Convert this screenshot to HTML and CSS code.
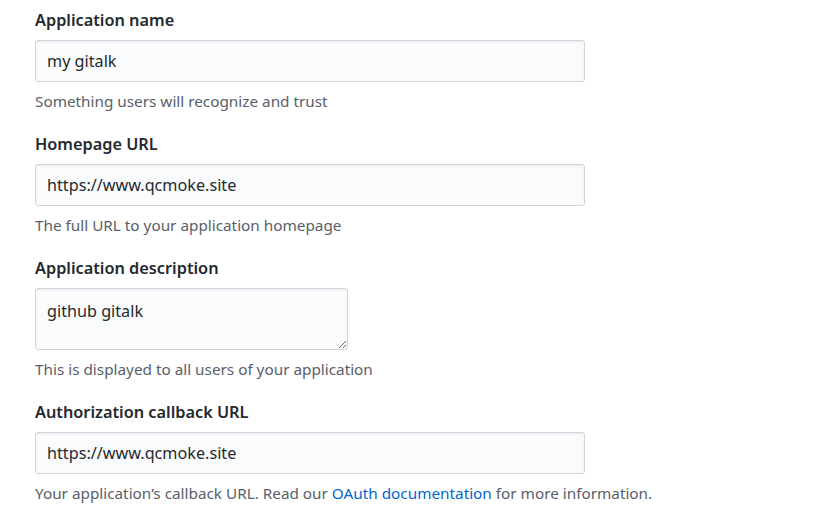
FILE: index.html
```html
<!DOCTYPE html>
<html>
<head>
<meta charset="utf-8">
<link rel="stylesheet" href="styles.css">
</head>
<body>
<form class="form">
  <div class="group">
    <label class="label">Application name</label>
    <input class="field" type="text" value="my gitalk">
    <p class="note">Something users will recognize and trust</p>
  </div>
  <div class="group">
    <label class="label">Homepage URL</label>
    <input class="field" type="text" value="https://www.qcmoke.site">
    <p class="note">The full URL to your application homepage</p>
  </div>
  <div class="group">
    <label class="label">Application description</label>
    <textarea class="field area">github gitalk</textarea>
    <p class="note">This is displayed to all users of your application</p>
  </div>
  <div class="group">
    <label class="label">Authorization callback URL</label>
    <input class="field" type="text" value="https://www.qcmoke.site">
    <p class="note">Your application’s callback URL. Read our <a class="link" href="#">OAuth documentation</a> for more information.</p>
  </div>
</form>
</body>
</html>
```

FILE: styles.css
```css
html, body {
  margin: 0;
  padding: 0;
  background: #ffffff;
}
body {
  font-family: "Noto Sans", "Open Sans", "Liberation Sans", sans-serif;
  color: #24292e;
}
.form {
  display: flex;
  flex-direction: column;
  gap: 23px;
  padding: 10px 0 0 35px;
}
.group {
  display: flex;
  flex-direction: column;
  align-items: flex-start;
}
.label {
  font-size: 16.3px;
  font-weight: 600;
  line-height: 20px;
  margin-bottom: 10px;
}
.field {
  box-sizing: border-box;
  width: 550px;
  height: 42px;
  padding: 8px 11px;
  font-family: inherit;
  font-size: 16.2px;
  line-height: 24px;
  color: #24292e;
  background: #fafbfc;
  border: 1px solid #d1d5da;
  border-radius: 3px;
  box-shadow: inset 0 1px 2px rgba(27, 31, 35, 0.075);
  margin: 0;
  outline: none;
}
.area {
  width: 313px;
  height: 62px;
  padding-top: 10px;
  resize: both;
}
.note {
  margin: 9px 0 0;
  font-size: 15.3px;
  line-height: 20px;
  color: #586069;
}
.link {
  color: #0366d6;
  text-decoration: none;
}
```
